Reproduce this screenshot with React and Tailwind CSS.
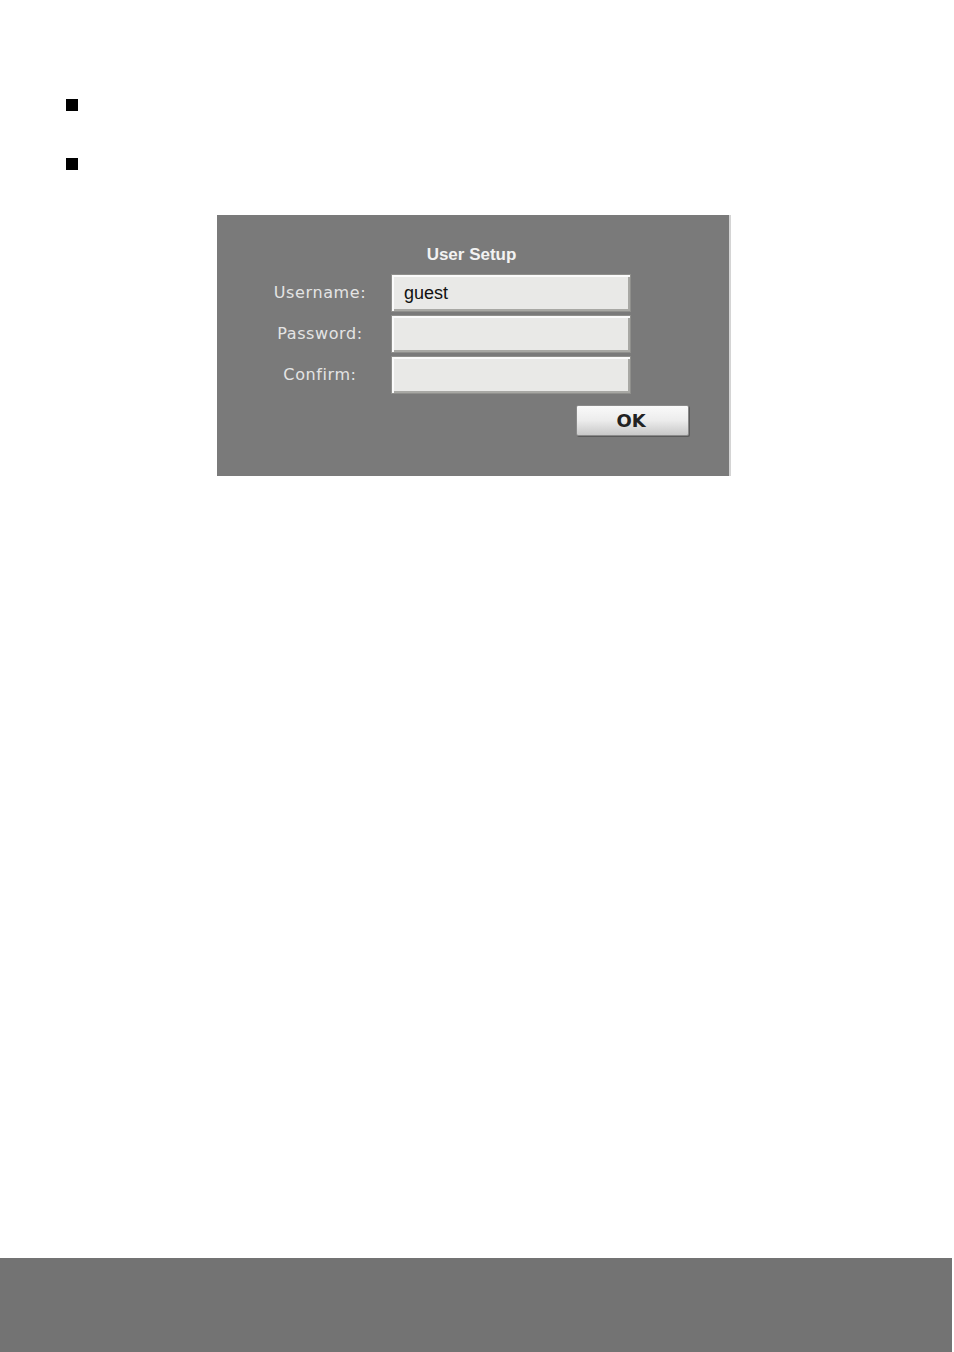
import React from "react";

function Field({ label, value }) {
  return (
    <div className="flex items-center h-[38px]">
      <div className="w-[140px] text-center text-[16px] tracking-[0.6px] text-[#e4e4e4] font-['Verdana','DejaVu_Sans',sans-serif]">{label}</div>
      <div className="ml-[1px] w-[240px] h-[38px] bg-[#e9e9e7] border border-[#8f8f8c] shadow-[inset_2px_2px_0_#fbfbfb,inset_-2px_-2px_0_#a8a8a4] flex items-center pl-[12px] text-[18px] text-[#111] font-['Liberation_Sans',Arial,sans-serif]">
        {value}
      </div>
    </div>
  );
}

export default function App() {
  return (
    <div className="w-[954px] h-[1352px] bg-white flex flex-col">
      {/* bullets */}
      <div className="pt-[99px] pl-[66px] flex flex-col gap-[47px]">
        <div className="w-[12px] h-[12px] bg-black" />
        <div className="w-[12px] h-[12px] bg-black" />
      </div>

      {/* user setup panel */}
      <div className="ml-[217px] mt-[45px] w-[514px] h-[261px] bg-[#7a7a7a] border-r-2 border-[#d4d4d4] flex flex-col">
        <div className="pt-[30px] pr-[3px] text-center text-[17px] font-bold text-[#f2f2f2] leading-[20px] font-['Liberation_Sans',Arial,sans-serif]">
          User Setup
        </div>
        <div className="mt-[9px] pl-[33px] flex flex-col gap-[3px]">
          <Field label="Username:" value="guest" />
          <Field label="Password:" value="" />
          <Field label="Confirm:" value="" />
        </div>
        <div className="mt-[11px] pl-[359px]">
          <button className="w-[113px] h-[31px] pr-[3px] rounded-[2px] border border-[#8a8a8a] bg-gradient-to-b from-[#fafafa] via-[#ececec] to-[#c8c8c8] shadow-[1px_1px_0_#5a5a5a] text-[18px] font-bold text-[#222] font-['DejaVu_Sans',sans-serif] leading-none">
            OK
          </button>
        </div>
      </div>

      {/* footer */}
      <div className="mt-auto h-[94px] w-[952px] bg-[#737373]" />
    </div>
  );
}
